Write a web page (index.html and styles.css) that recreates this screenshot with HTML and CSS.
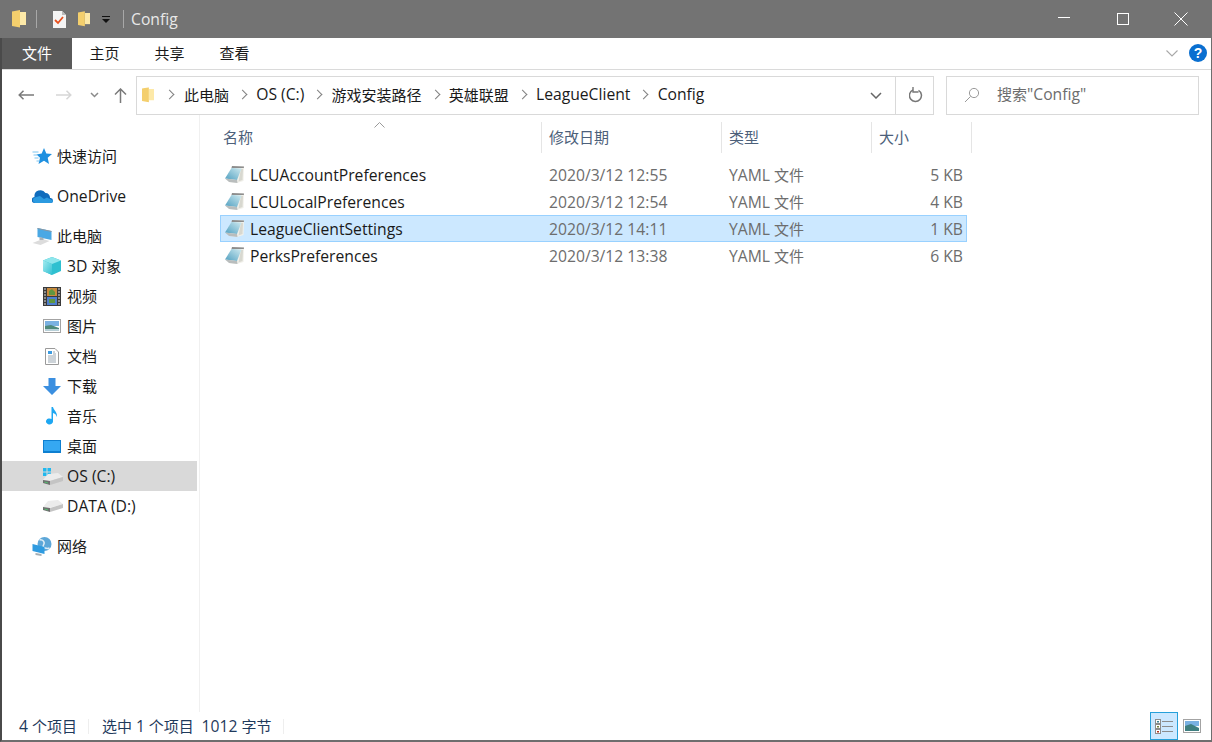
FILE: index.html
```html
<!DOCTYPE html>
<html lang="zh-CN">
<head>
<meta charset="utf-8">
<title>Config</title>
<link rel="stylesheet" href="styles.css">
</head>
<body>
<svg class="defs" width="0" height="0">
  <defs>
    <linearGradient id="page" x1="0" y1="1" x2="1" y2="0">
      <stop offset="0" stop-color="#4f9fc0"/>
      <stop offset="1" stop-color="#cfeaf0"/>
    </linearGradient>
    <linearGradient id="cube" x1="0" y1="0" x2="1" y2="1">
      <stop offset="0" stop-color="#a5ecf0"/>
      <stop offset="1" stop-color="#32c0d2"/>
    </linearGradient>
    <symbol id="folder" viewBox="0 0 14 18">
      <path d="M8 2H14V15H8Z" fill="#fde9a8"/>
      <path d="M0 1.500 8 0V17.500L0 16Z" fill="#f4cf6d"/>
    </symbol>
    <symbol id="yaml" viewBox="0 0 20 18">
      <path d="M7 0 19 .5 18.500 15 12 17 4 16Z" fill="#f1f0ea"/>
      <path d="M16 3 18 3 17.500 14 13.500 15.500Z" fill="#d8d8d0"/>
      <path d="M7 0 19 .5 18.800 2 6.500 2Z" fill="#8d8d8d"/>
      <path d="M6.500 2 16.500 2.500 12 14 0 12.500Z" fill="url(#page)"/>
      <path d="M0 12.500 12 14 12.500 17 4 16Z" fill="#b9bdbd"/>
    </symbol>
    <symbol id="drive" viewBox="0 0 20 12">
      <path d="M0 7 5 1 15 0 20 4 6 8Z" fill="#ececec"/>
      <path d="M0 7 7 8V12L0 10Z" fill="#6f6f6f"/>
      <path d="M7 8 20 4V8L7 12Z" fill="#c4c4c4"/>
      <path d="M1.500 9 5 10" stroke="#54c070" stroke-width="1"/>
    </symbol>
  </defs>
</svg>
<div class="window">
  <header class="titlebar">
    <div class="qat">
      <svg width="14" height="18"><use href="#folder"/></svg>
      <span class="qsep"></span>
      <svg width="14" height="17" viewBox="0 0 14 17"><path d="M1 0H10L14 4V17H1Z" fill="#f4f4f4"/><path d="M10 0 14 4H10Z" fill="#bbb"/><path d="M3 9 6 12 11 6" fill="none" stroke="#e8501e" stroke-width="1.800"/></svg>
      <svg class="i-folder2" width="12" height="18"><use href="#folder"/></svg>
      <svg class="qdrop" width="8" height="7" viewBox="0 0 8 7"><path d="M0 0H8V1H0Z" fill="#111"/><path d="M0 3H8L4 7Z" fill="#111"/></svg>
      <span class="qsep qsep2"></span>
    </div>
    <span class="wintitle lat">Config</span>
    <div class="wincontrols">
      <svg width="14" height="14" viewBox="0 0 14 14"><path d="M1 5.500H13" stroke="#fff"/></svg>
      <svg width="14" height="14" viewBox="0 0 14 14"><rect x="1.500" y="1.500" width="11" height="11" fill="none" stroke="#fff"/></svg>
      <svg width="14" height="14" viewBox="0 0 14 14"><path d="M.5.500 13.500 13.500M13.500.500 .5 13.500" stroke="#fff"/></svg>
    </div>
  </header>
  <nav class="ribbon">
    <span class="tab tab-file">文件</span>
    <span class="tab">主页</span>
    <span class="tab">共享</span>
    <span class="tab">查看</span>
    <div class="ribbon-right">
      <svg width="12" height="7" viewBox="0 0 12 7"><path d="M.5.500 6 6 11.500.5" fill="none" stroke="#a8a8a8" stroke-width="1.100"/></svg>
      <span class="help">?</span>
    </div>
  </nav>
  <div class="addressrow">
    <div class="navbtns">
      <svg width="16" height="10" viewBox="0 0 16 10"><path d="M5.500.7 1.200 5 5.500 9.300M1.200 5H16" fill="none" stroke="#7a7a7a" stroke-width="1.500"/></svg>
      <svg class="nav-fwd" width="16" height="10" viewBox="0 0 16 10"><path d="M10.500.7 14.800 5 10.500 9.300M14.800 5H0" fill="none" stroke="#d6d6d6" stroke-width="1.500"/></svg>
      <svg class="nav-down" width="9" height="6" viewBox="0 0 9 6"><path d="M1 1 4.500 4.500 8 1" fill="none" stroke="#8a8a8a" stroke-width="1.500"/></svg>
      <svg class="nav-up" width="13" height="15" viewBox="0 0 13 15"><path d="M1 6.500 6.500 1 12 6.500M6.500 1V15" fill="none" stroke="#7a7a7a" stroke-width="1.500"/></svg>
    </div>
    <div class="address">
      <svg class="addr-folder" width="12" height="16" viewBox="0 0 14 18"><use href="#folder"/></svg>
      <ol class="crumbs">
        <li>此电脑</li><li class="lat">OS (C:)</li><li>游戏安装路径</li><li>英雄联盟</li><li class="lat">LeagueClient</li><li class="lat">Config</li>
      </ol>
      <span class="addr-drop"><svg width="12" height="7" viewBox="0 0 12 7"><path d="M1 1 6 6 11 1" fill="none" stroke="#666" stroke-width="1.500"/></svg></span>
      <span class="addr-refresh"><svg width="15" height="16" viewBox="0 0 15 16"><path d="M9.500 3.300A6 6 0 1 1 4 3" fill="none" stroke="#777" stroke-width="1.500"/><path d="M4 0V5.500H9.500" fill="none" stroke="#777" stroke-width="1.400" transform="translate(0 -.5)"/></svg></span>
    </div>
    <div class="search">
      <svg width="16" height="16" viewBox="0 0 16 16"><circle cx="10" cy="6" r="4.600" fill="none" stroke="#9a9a9a"/><path d="M6.600 9.400 1 15" stroke="#9a9a9a"/></svg>
      <span class="search-text">搜索<span class="lat">"Config"</span></span>
    </div>
  </div>
  <div class="body">
    <aside class="sidebar">
      <div class="navitem head">
        <svg width="20" height="17" viewBox="0 0 20 17"><path d="M11.500 0 13.800 5.500 19.500 6 15.200 9.800 16.500 16 11.500 12.700 6 16 7.500 9.800 4 6.500 9.200 5.500Z" fill="#1e90e0"/><path d="M0 4H6M1 7H5M2 10H6M4 13H7" stroke="#7cc4ef"/></svg>
        <span>快速访问</span>
      </div>
      <div class="navitem head">
        <svg width="21" height="14" viewBox="0 0 21 14"><path d="M3 14A3 3 0 0 1 2.500 8 6 6 0 0 1 13.500 4 4.500 4.500 0 0 1 18 9 2.600 2.600 0 0 1 21 11.500 2.500 2.500 0 0 1 18.500 14Z" fill="#0f6cbd"/><path d="M3 14A3 3 0 0 1 2.500 8.500L8 7 12 10 15 8.500 21 11.500A2.500 2.500 0 0 1 18.500 14Z" fill="#2b9ae0"/></svg>
        <span class="lat">OneDrive</span>
      </div>
      <div class="navitem head">
        <svg width="20" height="17" viewBox="0 0 20 17"><path d="M5 0 19 3V12L5 9Z" fill="#4aa8e4"/><path d="M5 0 19 3 19 4 5 1Z" fill="#8a98a4"/><path d="M0 15 10 11 17 13 8 17Z" fill="#dcdcdc"/><path d="M7 9 11 10 11 12 7 12Z" fill="#a9b2b8"/></svg>
        <span>此电脑</span>
      </div>
      <div class="navitem sub">
        <svg width="18" height="18" viewBox="0 0 18 18"><path d="M9 0 18 3.500V14L9 18 0 14V3.500Z" fill="#2fc0d0"/><path d="M9 0 18 3.500 9 7 0 3.500Z" fill="#8fe6ec"/><path d="M0 3.500 9 7V18L0 14Z" fill="url(#cube)"/></svg>
        <span class="mixed"><span class="lat">3D</span> 对象</span>
      </div>
      <div class="navitem sub">
        <svg width="18" height="19" viewBox="0 0 18 19"><rect width="18" height="19" fill="#3a3a3a"/><path d="M4 1H14V9H4Z" fill="#c98a3c"/><path d="M4 10H14V18H4Z" fill="#4e7fce"/><path d="M6 4 9 2 12 5V8H6ZM6 12H12V16H6Z" fill="#5f9640"/><path d="M1 2H3M1 5H3M1 8H3M1 11H3M1 14H3M1 17H3M15 2H17M15 5H17M15 8H17M15 11H17M15 14H17M15 17H17" stroke="#ddd"/></svg>
        <span>视频</span>
      </div>
      <div class="navitem sub">
        <svg width="18" height="14" viewBox="0 0 18 14"><rect x=".5" y=".5" width="17" height="13" fill="#fff" stroke="#a3a3a3"/><rect x="2" y="2" width="14" height="5" fill="#7ab1e2"/><path d="M2 7 8 6 16 9V12H2Z" fill="#4f8a7c"/><path d="M2 10H16V12H2Z" fill="#b8d0d8"/></svg>
        <span>图片</span>
      </div>
      <div class="navitem sub">
        <svg width="14" height="17" viewBox="0 0 14 17"><path d="M.5.500H10L13.500 4V16.500H.5Z" fill="#fff" stroke="#9a9a9a"/><rect x="3" y="3" width="4" height="3" fill="#3c9be0"/><path d="M8 4H10M8 6H11M3 8H11M3 10H11M3 12H11M3 14H11" stroke="#9aa7b2"/></svg>
        <span>文档</span>
      </div>
      <div class="navitem sub">
        <svg width="18" height="17" viewBox="0 0 18 17"><path d="M5.500 0H12.500V8H18L9 17 0 8H5.500Z" fill="#3b8fe0"/></svg>
        <span>下载</span>
      </div>
      <div class="navitem sub">
        <svg width="12" height="18" viewBox="0 0 12 18"><path d="M5.500 0H7C7.500 3 11.500 5 11 10 10 7 8.500 6.500 7 6V14.500A3.500 3 0 1 1 5.500 12Z" fill="#1ea7f2"/></svg>
        <span>音乐</span>
      </div>
      <div class="navitem sub">
        <svg width="18" height="13" viewBox="0 0 18 13"><rect width="18" height="13" fill="#0e7fd0"/><rect x="1" y="1" width="16" height="10" fill="#35a8f2"/></svg>
        <span>桌面</span>
      </div>
      <div class="navitem sub selected">
        <svg class="nicon-drive" width="20" height="17" viewBox="0 0 20 17"><path d="M0 0H3.500V3.500H0ZM4.500 0H8V3.500H4.500ZM0 4.500H3.500V8H0ZM4.500 4.500H8V8H4.500Z" fill="#20b8ee"/><svg x="0" y="5" width="20" height="12" viewBox="0 0 20 12"><use href="#drive"/></svg></svg>
        <span class="lat">OS (C:)</span>
      </div>
      <div class="navitem sub">
        <svg class="nicon-drive" width="20" height="12" viewBox="0 0 20 12"><use href="#drive"/></svg>
        <span class="lat">DATA (D:)</span>
      </div>
      <div class="navitem head">
        <svg width="20" height="19" viewBox="0 0 20 19"><circle cx="12" cy="7" r="7" fill="#5da7d8"/><path d="M7 3C10 2 13 5 11 8S15 12 17 11" fill="none" stroke="#dcecf6" stroke-width="1.500"/><path d="M0 7 12 10V17L0 14Z" fill="#2f9be0"/><path d="M3 16 9 17 9 19 3 18Z" fill="#a4adb3"/></svg>
        <span>网络</span>
      </div>
    </aside>
    <main class="files">
      <span class="sort-caret"><svg width="11" height="6" viewBox="0 0 11 6"><path d="M.5 5.500 5.500.5 10.500 5.500" fill="none" stroke="#9a9a9a"/></svg></span>
      <div class="colhead">
        <span class="c-name">名称</span><span class="c-date">修改日期</span><span class="c-type">类型</span><span class="c-size">大小</span>
      </div>
      <ul class="rows">
        <li class="row"><span class="c-name"><svg width="20" height="18"><use href="#yaml"/></svg><span class="lat">LCUAccountPreferences</span></span><span class="c-date lat">2020/3/12 12:55</span><span class="c-type"><span class="lat">YAML</span> 文件</span><span class="c-size lat">5 KB</span></li>
        <li class="row"><span class="c-name"><svg width="20" height="18"><use href="#yaml"/></svg><span class="lat">LCULocalPreferences</span></span><span class="c-date lat">2020/3/12 12:54</span><span class="c-type"><span class="lat">YAML</span> 文件</span><span class="c-size lat">4 KB</span></li>
        <li class="row active"><span class="c-name"><svg width="20" height="18"><use href="#yaml"/></svg><span class="lat">LeagueClientSettings</span></span><span class="c-date lat">2020/3/12 14:11</span><span class="c-type"><span class="lat">YAML</span> 文件</span><span class="c-size lat">1 KB</span></li>
        <li class="row"><span class="c-name"><svg width="20" height="18"><use href="#yaml"/></svg><span class="lat">PerksPreferences</span></span><span class="c-date lat">2020/3/12 13:38</span><span class="c-type"><span class="lat">YAML</span> 文件</span><span class="c-size lat">6 KB</span></li>
      </ul>
    </main>
  </div>
  <footer class="status">
    <span class="st-count"><span class="lat">4</span> 个项目</span>
    <span class="st-sel">选中 <span class="lat">1</span> 个项目&nbsp;&nbsp;<span class="lat">1012</span> 字节</span>
    <div class="viewbtns">
      <span class="vbtn on"><svg width="19" height="15" viewBox="0 0 19 15"><rect x=".5" y=".5" width="5" height="4" fill="#fff" stroke="#8c8c8c"/><rect x=".5" y="5.500" width="5" height="4" fill="#fff" stroke="#8c8c8c"/><rect x=".5" y="10.500" width="5" height="4" fill="#fff" stroke="#8c8c8c"/><rect x="2" y="2" width="2" height="1.500" fill="#3a7f8f"/><rect x="2" y="7" width="2" height="1.500" fill="#6f7f3a"/><rect x="2" y="12" width="2" height="1.500" fill="#b03020"/><path d="M7 2.500H18M7 7.500H18M7 12.500H18" stroke="#8c8c8c"/></svg></span>
      <span class="vbtn"><svg width="18" height="14" viewBox="0 0 18 14"><rect x=".5" y=".5" width="17" height="13" fill="#fff" stroke="#a3a3a3"/><rect x="2" y="2" width="14" height="5" fill="#7ab1e2"/><path d="M2 7 8 5 16 9V12H2Z" fill="#3f7f80"/></svg></span>
    </div>
  </footer>
</div>
</body>
</html>
```
FILE: styles.css
```css
* { box-sizing: border-box; }
html, body { margin: 0; height: 100%; overflow: hidden; }
body { background: #fff; }
ul, ol { list-style: none; margin: 0; padding: 0; }
.defs { position: absolute; }
.window {
  width: 1212px; height: 742px;
  display: flex; flex-direction: column;
  border-left: 2px solid #4a4a4a;
  border-right: 1px solid #6e6e6e;
  border-bottom: 2px solid #6e6e6e;
  background: #fff;
  font: 15px "Open Sans", "Noto Sans CJK SC", sans-serif;
  color: #1a1a1a;
}
.lat { font-size: 15.700px; }
.titlebar {
  height: 38px; margin-left: -2px; margin-right: -1px;
  background: #737373;
  display: flex; align-items: center;
  flex: none;
}
.qat { display: flex; align-items: center; padding-left: 12px; }
.qsep { width: 1px; height: 18px; background: #a8a8a8; margin: 0 15px 0 10px; }
.qsep.qsep2 { margin: 0 7px 0 13px; }
.i-folder2 { margin-left: 12px; }
.qdrop { margin-left: 12px; }
.wintitle { color: #e8e8e8; padding-bottom: 1px; }
.wincontrols { margin-left: auto; display: flex; width: 155px; justify-content: space-between; padding-right: 24px; }
.ribbon {
  height: 32px; flex: none;
  display: flex; align-items: stretch;
  border-bottom: 1px solid #dadada;
}
.tab { width: 65px; display: flex; align-items: center; justify-content: center; font-size: 15px; padding-bottom: 3px; }
.tab-file { width: 70px; background: #5a5a5a; color: #fff; }
.ribbon-right { margin-left: auto; display: flex; align-items: center; gap: 11px; padding-right: 4px; padding-bottom: 1px; }
.help {
  width: 18px; height: 18px; border-radius: 50%;
  background: #0a6fd0; color: #fff;
  font: bold 14px/18px "Liberation Sans", sans-serif; text-align: center;
}
.addressrow { height: 45px; flex: none; display: flex; align-items: center; padding: 5px 12px 0 0; }
.navbtns { width: 134px; display: flex; align-items: center; padding-left: 16px; flex: none; }
.nav-fwd { margin-left: 22px; }
.nav-down { margin-left: 18px; }
.nav-up { margin-left: 15px; }
.address {
  width: 798px; height: 39px; flex: none;
  border: 1px solid #d9d9d9;
  display: flex; align-items: center;
  padding-left: 5px;
}
.crumbs { display: flex; align-items: center; flex: 1; padding-bottom: 2px; font-size: 15px; }
.crumbs li { display: flex; align-items: center; white-space: nowrap; }
.crumbs li::before {
  content: ""; width: 6px; height: 6px;
  border-top: 1.500px solid #808080; border-right: 1.500px solid #808080;
  transform: rotate(45deg); margin: 0 10.200px 0 10px;
}
.crumbs li:first-child::before { margin: 0 11px 0 12px; }
.addr-drop { width: 38px; display: flex; justify-content: center; }
.addr-refresh { width: 38px; height: 37px; border-left: 1px solid #d9d9d9; display: flex; align-items: center; justify-content: center; padding-left: 3px; }
.search {
  width: 253px; height: 39px; margin-left: 12px; flex: none;
  border: 1px solid #d9d9d9;
  display: flex; align-items: center; gap: 17px;
  padding-left: 17px;
  color: #6d6d6d;
}
.search-text { padding-bottom: 2px; }
.body { flex: 1; display: flex; min-height: 0; }
.sidebar { width: 198px; flex: none; padding-top: 26px; border-right: 1px solid #f0f0f0; }
.navitem { height: 30px; width: 195px; display: flex; align-items: center; font-size: 15px; }
.navitem > span { padding-bottom: 2px; }
.navitem > span.lat, .navitem > span.mixed { padding-bottom: 0; }
.navitem.head { margin-top: 10px; padding-left: 30px; }
.navitem.head:first-child { margin-top: 0; }
.navitem.head > svg { flex: none; width: 21px; margin-right: 4px; }
.navitem.sub { padding-left: 41px; }
.navitem.sub > svg { flex: none; width: 18px; margin-right: 6px; }
.selected { background: #d9d9d9; }
.navitem.sub > .nicon-drive { width: 20px; margin-right: 4px; }
.files { flex: 1; position: relative; padding-left: 20px; min-width: 0; }
.sort-caret { position: absolute; left: 174px; top: 4px; line-height: 6px; }
.colhead {
  height: 31px; margin-top: 7px;
  display: flex; align-items: center; color: #4c607a; font-size: 15px;
}
.colhead span {
  height: 31px; display: flex; align-items: center;
  border-right: 1px solid #e5e5e5; padding-bottom: 3px;
}
.c-name { width: 322px; padding-left: 3px; }
.c-date { width: 180px; padding-left: 7px; }
.c-type { width: 150px; padding-left: 7px; }
.c-size { width: 100px; padding-left: 7px; }
.rows { margin-top: 8px; width: 747px; }
.row { height: 27px; display: flex; align-items: center; border: 1px solid transparent; }
.row .c-name { display: flex; align-items: center; gap: 5px; width: 321px; padding-left: 4px; color: #1a1a1a; }
.row .c-name svg { flex: none; }
.row .c-date { width: 180px; padding-left: 7px; color: #6d6d6d; }
.row .c-type { width: 150px; padding-left: 7px; color: #6d6d6d; }
.row .c-size { width: 91px; text-align: right; color: #6d6d6d; padding: 0; }
.row.active { background: #cce8ff; border-color: #99d1ff; }
.status {
  height: 28px; flex: none;
  display: flex; align-items: center; font-size: 15px; color: #1f3a5c;
}
.st-count { width: 87px; padding-left: 17px; border-right: 1px solid #eee; height: 15px; line-height: 15px; }
.st-sel { width: 195px; padding-left: 13px; border-right: 1px solid #eee; height: 15px; line-height: 15px; white-space: nowrap; }
.viewbtns { margin-left: auto; display: flex; align-items: center; padding-right: 10px; }
.vbtn { width: 28px; height: 28px; display: flex; align-items: center; justify-content: center; }
.vbtn.on { background: #cce8ff; border: 1px solid #26a0da; }
.vbtn + .vbtn { margin-left: 5px; width: 18px; }
```
